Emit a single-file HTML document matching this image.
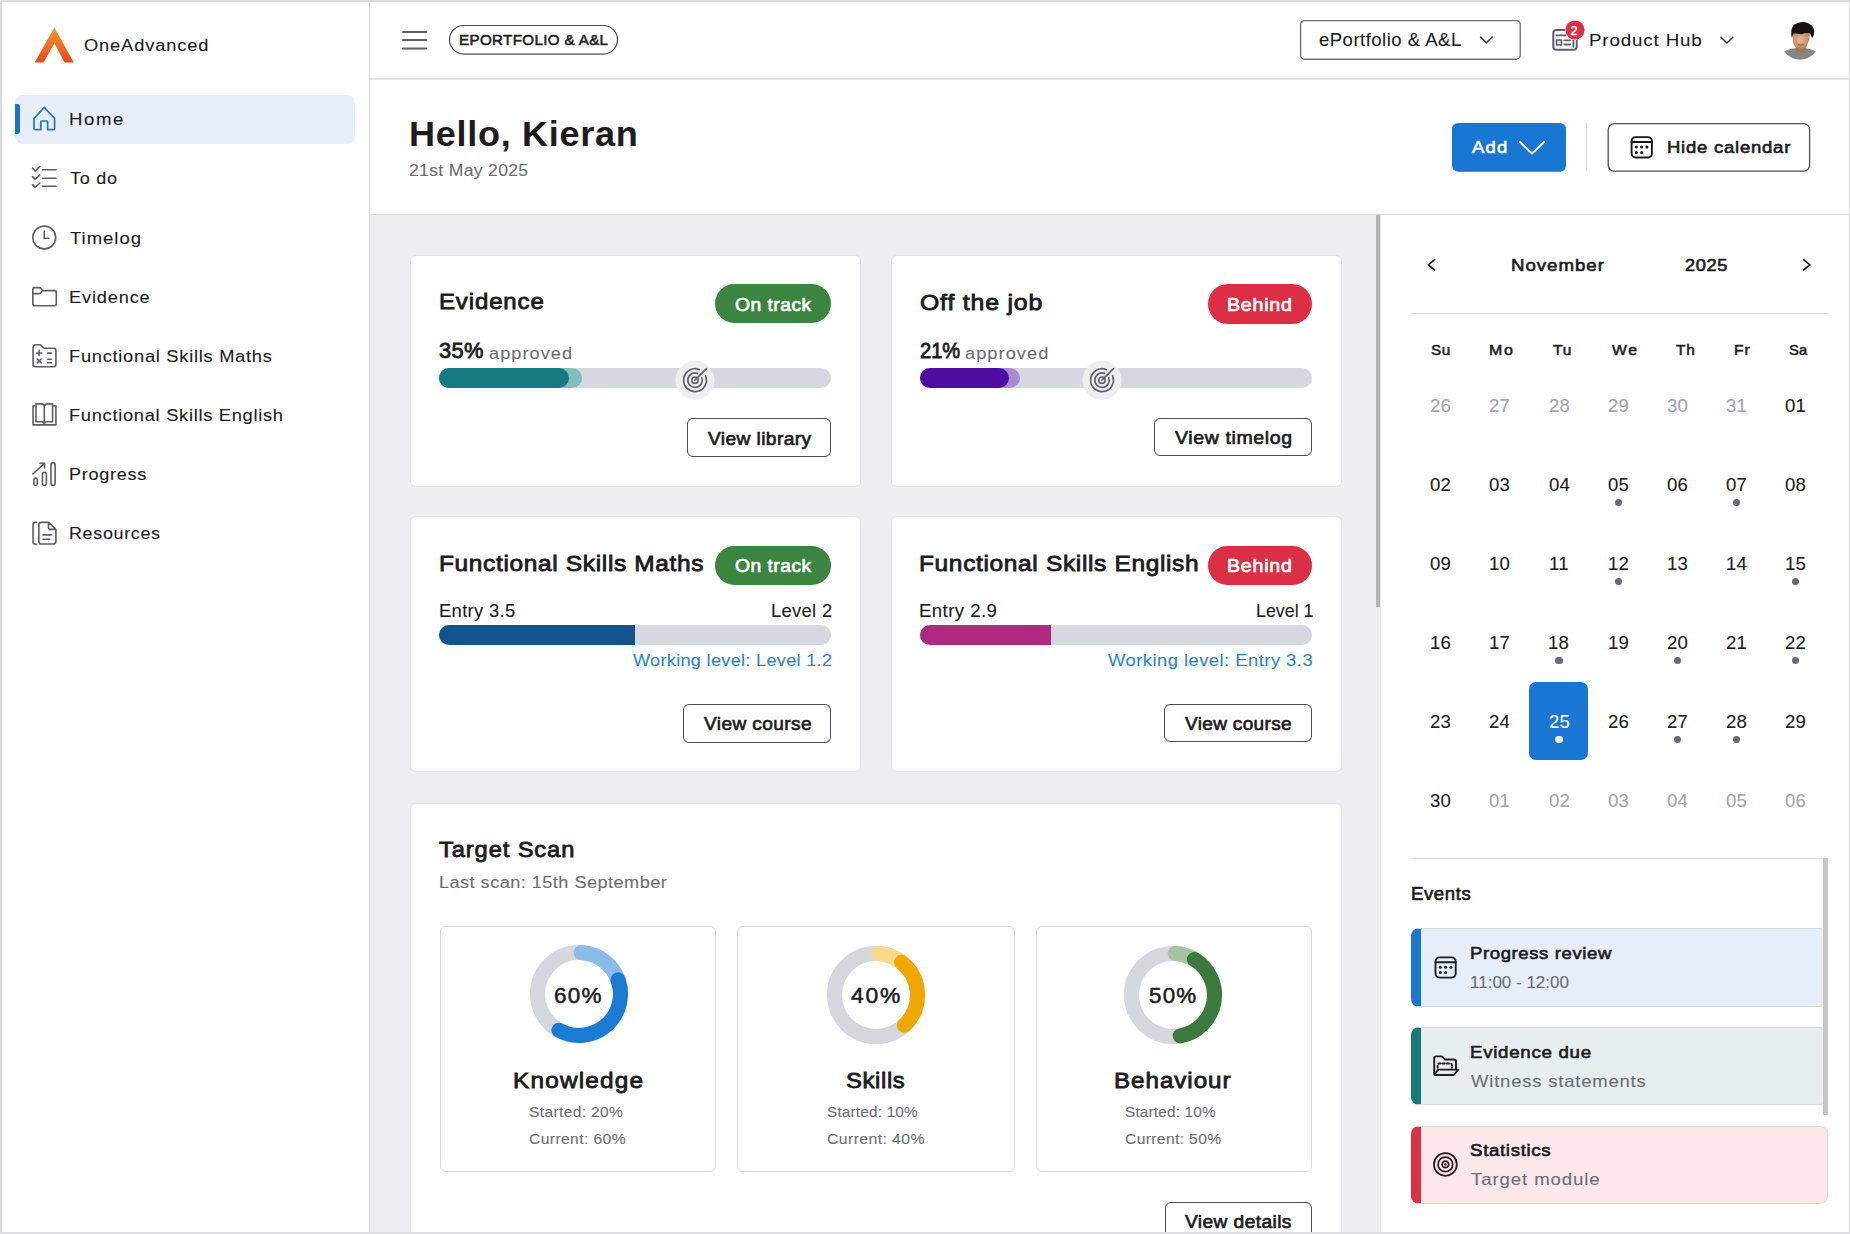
<!DOCTYPE html><html><head><meta charset="utf-8"><style>
html,body{margin:0;padding:0;width:1850px;height:1234px;overflow:hidden;background:#fff}
body{position:relative;font-family:"Liberation Sans",sans-serif}
.t{position:absolute;white-space:pre;line-height:1;transform-origin:0 0}
</style></head><body>
<div style="position:absolute;left:0px;top:0px;width:1850px;height:1234px;background:#fff"></div>
<div style="position:absolute;left:370px;top:215px;width:1011px;height:1019px;background:#eeeef1"></div>
<div style="position:absolute;left:369px;top:0px;width:1px;height:1234px;background:#d9d9dd"></div>
<div style="position:absolute;left:370px;top:78px;width:1480px;height:2px;background:#e3e3e6"></div>
<div style="position:absolute;left:370px;top:214px;width:1480px;height:1px;background:#dadade"></div>
<div style="position:absolute;left:1376px;top:215px;width:4px;height:392px;background:#b4b4b4"></div>
<div style="position:absolute;left:1380px;top:215px;width:1px;height:1019px;background:#e8e8ea"></div>
<svg style="position:absolute;left:0;top:0" width="370" height="80"><defs><linearGradient id="lg" x1="0" y1="0" x2="0" y2="1"><stop offset="0" stop-color="#f79a2a"/><stop offset="1" stop-color="#e8461f"/></linearGradient></defs><path d="M54.4 27.4 L73.8 62.6 L64.5 62.6 L54.4 43.3 L43.6 62.6 L34.6 62.6 Z" fill="url(#lg)"/></svg>
<div class="t" style="left:83.8px;top:37.5px;font-size:16.92px;letter-spacing:0.79px;color:#1b1b21;font-weight:400;-webkit-text-stroke:0.10px #1b1b21;transform:scaleX(1.0805);">OneAdvanced</div>
<div style="position:absolute;left:15px;top:94.5px;width:340px;height:49.5px;background:#e7eef9;border-radius:8px"></div>
<div style="position:absolute;left:15px;top:104px;width:5px;height:30px;background:#1a73c9;border-radius:0 3px 3px 0"></div>
<div class="t" style="left:68.8px;top:111.7px;font-size:16.78px;letter-spacing:1.41px;color:#1b1b21;font-weight:400;-webkit-text-stroke:0.10px #1b1b21;transform:scaleX(1.1099);">Home</div>
<div class="t" style="left:69.9px;top:171.1px;font-size:16.78px;letter-spacing:0.69px;color:#1b1b21;font-weight:400;-webkit-text-stroke:0.10px #1b1b21;transform:scaleX(1.0734);">To do</div>
<div class="t" style="left:69.9px;top:230.5px;font-size:16.78px;letter-spacing:0.90px;color:#1b1b21;font-weight:400;-webkit-text-stroke:0.10px #1b1b21;transform:scaleX(1.1028);">Timelog</div>
<div class="t" style="left:68.8px;top:289.8px;font-size:16.78px;letter-spacing:0.76px;color:#1b1b21;font-weight:400;-webkit-text-stroke:0.10px #1b1b21;transform:scaleX(1.0862);">Evidence</div>
<div class="t" style="left:68.8px;top:349.2px;font-size:16.78px;letter-spacing:0.65px;color:#1b1b21;font-weight:400;-webkit-text-stroke:0.10px #1b1b21;transform:scaleX(1.0919);">Functional Skills Maths</div>
<div class="t" style="left:68.8px;top:408.3px;font-size:16.78px;letter-spacing:0.63px;color:#1b1b21;font-weight:400;-webkit-text-stroke:0.10px #1b1b21;transform:scaleX(1.0921);">Functional Skills English</div>
<div class="t" style="left:68.8px;top:467.3px;font-size:16.78px;letter-spacing:0.66px;color:#1b1b21;font-weight:400;-webkit-text-stroke:0.10px #1b1b21;transform:scaleX(1.0760);">Progress</div>
<div class="t" style="left:68.8px;top:526.4px;font-size:16.78px;letter-spacing:0.63px;color:#1b1b21;font-weight:400;-webkit-text-stroke:0.10px #1b1b21;transform:scaleX(1.0685);">Resources</div>
<svg style="position:absolute;left:0;top:0" width="370" height="600" fill="none" stroke-linecap="round" stroke-linejoin="round">
<g stroke="#1f75c6" stroke-width="1.7"><path d="M34 118.5 L44.2 107.4 L54.6 118.5 V128.6 Q54.6 129.7 53.5 129.7 H47.6 V122 Q47.6 121 46.6 121 H41.8 Q40.8 121 40.8 122 V129.7 H35.1 Q34 129.7 34 128.6 Z"/></g>
<g stroke="#5d5d69" stroke-width="1.6">
<path d="M32.6 168.2 L35.2 171 L39.8 166.6 M32.6 176.6 L35.2 179.4 L39.8 175 M32.6 184.6 L35.2 187.4 L39.8 183"/>
<path d="M42.6 169.7 H56 M42.6 178.2 H56 M42.6 186.3 H56"/>
<circle cx="44.3" cy="237.5" r="11.4"/><path d="M44.2 231.4 V238.3 H49"/>
<path d="M32.8 289 Q32.8 287.6 34.2 287.6 H39.2 Q40.4 287.6 41.2 288.6 L42.5 290.6 H55 Q56.3 290.6 56.3 292 V304.3 Q56.3 305.7 55 305.7 H34.2 Q32.8 305.7 32.8 304.3 Z M32.8 293.6 H38.8 Q40.2 293.6 41 292.4 L42.2 290.8"/>
<path d="M33.1 347.2 Q33.1 344.7 35.6 344.7 H39.4 Q40.6 344.7 41.4 345.6 L43.2 347.6 Q43.8 348.3 44.8 348.3 H53.4 Q55.9 348.3 55.9 350.8 V364.2 Q55.9 366.7 53.4 366.7 H35.6 Q33.1 366.7 33.1 364.2 Z"/>
<path d="M39.15 350.4 V355.6 M36.55 353 H41.75 M37.2 359 L41.1 362.9 M41.1 359 L37.2 362.9 M47.7 353.1 H51.5 M47.7 359.2 H51.5 M47.7 362.8 H51.5"/>
<path d="M36 405.7 H33.06 V424.9 H55.9 V405.7 H52.6"/>
<path d="M44.3 423.6 V407.4 Q44.3 403.9 40.8 403.9 H36 V421.8 H41.6 Q43.6 421.8 44.3 423.6 M44.3 407.4 Q44.3 403.9 47.8 403.9 H52.6 V421.8 H47 Q45 421.8 44.3 423.6"/>
<path d="M32.7 474 L44.4 463.4 M39.9 463.2 H44.6 V468"/>
<rect x="33.86" y="478.1" width="3.34" height="7.2" rx="1.67"/><rect x="42.4" y="472.2" width="4" height="13.1" rx="2"/><rect x="51" y="462.9" width="4.1" height="22.4" rx="2.05"/>
<path d="M36.6 522.4 H35.6 Q33.06 522.4 33.06 525 V541.6 Q33.06 544.2 35.6 544.2 H36.6"/>
<path d="M38.8 525 Q38.8 522.4 41.4 522.4 H48.6 L55.9 529.4 V541.4 Q55.9 544 53.3 544 H41.4 Q38.8 544 38.8 541.4 Z M48.5 522.6 V527.4 Q48.5 529.4 50.5 529.4 H55.7 M43 534.9 H51.5 M43 539.2 H49.7"/>
</g></svg>
<svg style="position:absolute;left:370px;top:0" width="1480" height="215" fill="none" stroke-linecap="round" stroke-linejoin="round">
<g transform="translate(-370,0)">
<path d="M403 32 H426.2 M403 40 H426.2 M403 48.4 H426.2" stroke="#5d5d69" stroke-width="2"/>
<rect x="449.5" y="25.5" width="168" height="28.6" rx="14.3" stroke="#4c4c54" stroke-width="1.2"/>
<rect x="1300.6" y="20.6" width="219.6" height="38.6" rx="4" stroke="#6e6e78" stroke-width="1.4"/>
<path d="M1480.6 37 L1486.4 42.8 L1492.2 37" stroke="#3d3d45" stroke-width="1.6"/>
<rect x="1553.3" y="30.1" width="23.4" height="19.6" rx="3" stroke="#5d5d69" stroke-width="2"/>
<path d="M1556.5 35.3 H1566 M1564.4 40.3 H1570 M1564.4 44.5 H1570 M1573.4 38.5 V46.8" stroke="#5d5d69" stroke-width="1.8"/>
<rect x="1556.6" y="40" width="4.8" height="5" stroke="#5d5d69" stroke-width="1.7"/>
<circle cx="1575" cy="30" r="10.2" fill="#fff"/>
<circle cx="1575" cy="30" r="9.6" fill="#dc2d43" stroke="none"/>
<path d="M1721 37.2 L1726.9 43 L1732.8 37.2" stroke="#3d3d45" stroke-width="1.6"/>
<rect x="1452" y="123" width="114" height="48.8" rx="6" fill="#1976d2" stroke="none"/>
<path d="M1520 142 L1532 153.6 L1544 142" stroke="#fff" stroke-width="2"/>
<path d="M1586.5 123 V171" stroke="#dcdce0" stroke-width="1"/>
<rect x="1608.2" y="123.6" width="201.4" height="47.6" rx="6" stroke="#4e4e56" stroke-width="1.3"/>
<rect x="1631.6" y="137.1" width="20.3" height="20.4" rx="4" stroke="#16161a" stroke-width="1.9"/>
<path d="M1631.6 142 H1651.9" stroke="#16161a" stroke-width="1.9"/>
<g fill="#16161a" stroke="none"><circle cx="1636.3" cy="146.9" r="1.5"/><circle cx="1641.6" cy="146.9" r="1.5"/><circle cx="1646.9" cy="146.9" r="1.5"/><circle cx="1636.3" cy="152.5" r="1.5"/><circle cx="1641.6" cy="152.5" r="1.5"/></g>
</g></svg>
<div class="t" style="left:459.1px;top:33.4px;font-size:14.52px;letter-spacing:0.36px;color:#1b1b21;font-weight:400;-webkit-text-stroke:0.52px #1b1b21;transform:scaleX(1.0415);">EPORTFOLIO &amp; A&amp;L</div>
<div class="t" style="left:1319.3px;top:32.0px;font-size:17.48px;letter-spacing:0.47px;color:#1b1b21;font-weight:400;-webkit-text-stroke:0.10px #1b1b21;transform:scaleX(1.0589);">ePortfolio &amp; A&amp;L</div>
<div class="t" style="left:1589.2px;top:32.2px;font-size:17.20px;letter-spacing:0.78px;color:#1b1b21;font-weight:400;-webkit-text-stroke:0.10px #1b1b21;transform:scaleX(1.0909);">Product Hub</div>
<div class="t" style="left:1570.6px;top:25.0px;font-size:12.69px;letter-spacing:0.00px;color:#fff;font-weight:400;-webkit-text-stroke:0.46px #fff;">2</div>
<svg style="position:absolute;left:1780px;top:18px" width="40" height="44" viewBox="1780 18 40 44">
<defs><clipPath id="av"><circle cx="1800" cy="40.5" r="19.2"/></clipPath>
<radialGradient id="skin" cx="0.45" cy="0.4" r="0.6"><stop offset="0" stop-color="#e8b992"/><stop offset="1" stop-color="#b9805a"/></radialGradient></defs>
<g clip-path="url(#av)">
<path d="M1784 51.5 Q1790 48.2 1796.5 48 L1800.5 50.5 L1805 48 Q1811 48.5 1816.5 51.8 L1817 62 H1783 Z" fill="#858786"/>
<path d="M1795.5 44 L1796 50.5 Q1800.5 53 1805.5 50.5 L1805.5 44 Z" fill="#a56c48"/>
<path d="M1792.8 33 Q1792 44 1795.5 47.5 Q1800 51 1805 48 Q1809.5 44 1809.8 33 Z" fill="url(#skin)"/>
<path d="M1798 44.6 Q1800.5 45.8 1803.5 44.6" stroke="#8a5238" stroke-width="1" fill="none"/>
<path d="M1791.8 38 Q1789.8 29 1794 24.8 Q1799 21 1806 22.2 Q1813.5 24 1814.2 31 Q1814.4 35.5 1812 38.2 Q1811 34.5 1809.8 33.2 Q1805 32.6 1801.5 34.2 Q1797 33.2 1793.5 33.5 Q1792.6 35.5 1791.8 38 Z" fill="#161210"/>
</g></svg>
<div class="t" style="left:409.2px;top:116.6px;font-size:34.68px;letter-spacing:0.67px;color:#1b1b21;font-weight:700;transform:scaleX(1.0403);">Hello, Kieran</div>
<div class="t" style="left:409.2px;top:163.2px;font-size:16.92px;letter-spacing:0.33px;color:#6c6c78;font-weight:400;-webkit-text-stroke:0.10px #6c6c78;transform:scaleX(1.0371);">21st May 2025</div>
<div class="t" style="left:1471.9px;top:140.2px;font-size:16.92px;letter-spacing:1.19px;color:#fff;font-weight:400;-webkit-text-stroke:0.61px #fff;transform:scaleX(1.0874);">Add</div>
<div class="t" style="left:1666.6px;top:140.2px;font-size:16.92px;letter-spacing:0.72px;color:#1b1b21;font-weight:400;-webkit-text-stroke:0.61px #1b1b21;transform:scaleX(1.0915);">Hide calendar</div>
<div style="position:absolute;left:410px;top:255px;width:451px;height:232px;background:#fff;border:1px solid #e2e2e6;border-radius:6px;box-sizing:border-box"></div>
<div style="position:absolute;left:891px;top:255px;width:451px;height:232px;background:#fff;border:1px solid #e2e2e6;border-radius:6px;box-sizing:border-box"></div>
<div style="position:absolute;left:410px;top:516px;width:451px;height:256px;background:#fff;border:1px solid #e2e2e6;border-radius:6px;box-sizing:border-box"></div>
<div style="position:absolute;left:891px;top:516px;width:451px;height:256px;background:#fff;border:1px solid #e2e2e6;border-radius:6px;box-sizing:border-box"></div>
<div style="position:absolute;left:410px;top:803px;width:932px;height:497px;background:#fff;border:1px solid #e2e2e6;border-radius:6px;box-sizing:border-box"></div>
<div class="t" style="left:438.8px;top:290.9px;font-size:22.42px;letter-spacing:0.83px;color:#1b1b21;font-weight:400;-webkit-text-stroke:0.81px #1b1b21;transform:scaleX(1.0690);">Evidence</div>
<div style="position:absolute;left:715.3px;top:284.1px;width:115.90000000000009px;height:39.39999999999998px;background:#3c8541;border-radius:20px"></div>
<div class="t" style="left:734.7px;top:296.0px;font-size:18.33px;letter-spacing:0.47px;color:#fff;font-weight:400;-webkit-text-stroke:0.66px #fff;transform:scaleX(1.0505);">On track</div>
<div class="t" style="left:439.0px;top:340.8px;font-size:21.43px;letter-spacing:0.36px;color:#1b1b21;font-weight:400;-webkit-text-stroke:0.77px #1b1b21;transform:scaleX(1.0176);">35%</div>
<div class="t" style="left:488.5px;top:345.1px;font-size:16.35px;letter-spacing:0.95px;color:#6c6c78;font-weight:400;-webkit-text-stroke:0.10px #6c6c78;transform:scaleX(1.1105);">approved</div>
<div style="position:absolute;left:439px;top:368px;width:392px;height:20px;background:#d7d7e0;border-radius:10px"></div>
<div style="position:absolute;left:439px;top:368px;width:142.60000000000002px;height:20px;background:#82bfba;border-radius:10px"></div>
<div style="position:absolute;left:439px;top:368px;width:129.5px;height:20px;background:#167b81;border-radius:10px"></div>
<div style="position:absolute;left:687.2px;top:417.7px;width:144.0px;height:39.0px;border:1.3px solid #4e4e56;border-radius:6px;box-sizing:border-box"></div>
<div class="t" style="left:707.7px;top:429.6px;font-size:18.33px;letter-spacing:0.38px;color:#1b1b21;font-weight:400;-webkit-text-stroke:0.66px #1b1b21;transform:scaleX(1.0465);">View library</div>
<div class="t" style="left:919.8px;top:291.1px;font-size:22.98px;letter-spacing:0.77px;color:#1b1b21;font-weight:400;-webkit-text-stroke:0.83px #1b1b21;transform:scaleX(1.0796);">Off the job</div>
<div style="position:absolute;left:1208.4px;top:284px;width:104.0px;height:39.80000000000001px;background:#dc2f45;border-radius:20px"></div>
<div class="t" style="left:1227.4px;top:296.0px;font-size:18.33px;letter-spacing:0.72px;color:#fff;font-weight:400;-webkit-text-stroke:0.66px #fff;transform:scaleX(1.0699);">Behind</div>
<div class="t" style="left:919.9px;top:340.8px;font-size:21.43px;letter-spacing:0.00px;color:#1b1b21;font-weight:400;-webkit-text-stroke:0.77px #1b1b21;transform:scaleX(0.9376);">21%</div>
<div class="t" style="left:965.3px;top:345.1px;font-size:16.35px;letter-spacing:0.96px;color:#6c6c78;font-weight:400;-webkit-text-stroke:0.10px #6c6c78;transform:scaleX(1.1128);">approved</div>
<div style="position:absolute;left:920px;top:368px;width:392.4000000000001px;height:20px;background:#d7d7e0;border-radius:10px"></div>
<div style="position:absolute;left:920px;top:368px;width:99.79999999999995px;height:20px;background:#a98ad4;border-radius:10px"></div>
<div style="position:absolute;left:920px;top:368px;width:88.79999999999995px;height:20px;background:#4e0da0;border-radius:10px"></div>
<div style="position:absolute;left:1154.3px;top:417.6px;width:158.10000000000014px;height:38.599999999999966px;border:1.3px solid #4e4e56;border-radius:6px;box-sizing:border-box"></div>
<div class="t" style="left:1175.3px;top:429.2px;font-size:18.33px;letter-spacing:0.57px;color:#1b1b21;font-weight:400;-webkit-text-stroke:0.66px #1b1b21;transform:scaleX(1.0654);">View timelog</div>
<svg style="position:absolute;left:675.3px;top:360px" width="40" height="40" viewBox="675.3 360 40 40" fill="none">
<circle cx="695.3" cy="380.2" r="19.5" fill="#eeeef1"/>
<path d="M705.8 375.7 A11.4 11.4 0 1 1 699.8 369.7" stroke="#63636d" stroke-width="1.75" stroke-linecap="round"/>
<path d="M702.0999999999999 377.7 A7.2 7.2 0 1 1 697.8 373.4" stroke="#63636d" stroke-width="1.75" stroke-linecap="round"/>
<circle cx="695.3" cy="380.2" r="3.2" stroke="#63636d" stroke-width="1.6"/>
<path d="M695.3 380.2 L706.8 368.7" stroke="#63636d" stroke-width="1.75" stroke-linecap="round"/>
</svg>
<svg style="position:absolute;left:1082.4px;top:360px" width="40" height="40" viewBox="1082.4 360 40 40" fill="none">
<circle cx="1102.4" cy="380.2" r="19.5" fill="#eeeef1"/>
<path d="M1112.9 375.7 A11.4 11.4 0 1 1 1106.9 369.7" stroke="#63636d" stroke-width="1.75" stroke-linecap="round"/>
<path d="M1109.2 377.7 A7.2 7.2 0 1 1 1104.9 373.4" stroke="#63636d" stroke-width="1.75" stroke-linecap="round"/>
<circle cx="1102.4" cy="380.2" r="3.2" stroke="#63636d" stroke-width="1.6"/>
<path d="M1102.4 380.2 L1113.9 368.7" stroke="#63636d" stroke-width="1.75" stroke-linecap="round"/>
</svg>
<div class="t" style="left:438.7px;top:552.0px;font-size:22.98px;letter-spacing:0.63px;color:#1b1b21;font-weight:400;-webkit-text-stroke:0.83px #1b1b21;transform:scaleX(1.0635);">Functional Skills Maths</div>
<div style="position:absolute;left:715.3px;top:546.2px;width:115.90000000000009px;height:38.59999999999991px;background:#3c8541;border-radius:20px"></div>
<div class="t" style="left:734.7px;top:557.0px;font-size:18.33px;letter-spacing:0.47px;color:#fff;font-weight:400;-webkit-text-stroke:0.66px #fff;transform:scaleX(1.0505);">On track</div>
<div class="t" style="left:438.6px;top:602.7px;font-size:17.76px;letter-spacing:0.31px;color:#1b1b21;font-weight:400;-webkit-text-stroke:0.10px #1b1b21;transform:scaleX(1.0375);">Entry 3.5</div>
<div class="t" style="left:770.9px;top:602.7px;font-size:17.76px;letter-spacing:0.31px;color:#1b1b21;font-weight:400;-webkit-text-stroke:0.10px #1b1b21;transform:scaleX(1.0347);">Level 2</div>
<div style="position:absolute;left:439px;top:625px;width:392px;height:19.5px;background:#d7d7e0;border-radius:10px"></div>
<div style="position:absolute;left:439px;top:625px;width:195.79999999999995px;height:19.5px;background:#13528b;border-radius:10px 0 0 10px"></div>
<div class="t" style="left:633.0px;top:651.5px;font-size:17.34px;letter-spacing:0.32px;color:#2a86d1;font-weight:400;-webkit-text-stroke:0.10px #2a86d1;transform:scaleX(1.0419);">Working level: Level 1.2</div>
<div style="position:absolute;left:683.3px;top:704.2px;width:147.9000000000001px;height:38.39999999999998px;border:1.3px solid #4e4e56;border-radius:6px;box-sizing:border-box"></div>
<div class="t" style="left:704.2px;top:715.0px;font-size:18.33px;letter-spacing:0.39px;color:#1b1b21;font-weight:400;-webkit-text-stroke:0.66px #1b1b21;transform:scaleX(1.0405);">View course</div>
<div class="t" style="left:919.0px;top:552.4px;font-size:22.98px;letter-spacing:0.62px;color:#1b1b21;font-weight:400;-webkit-text-stroke:0.83px #1b1b21;transform:scaleX(1.0650);">Functional Skills English</div>
<div style="position:absolute;left:1208.4px;top:546px;width:104.0px;height:38.60000000000002px;background:#dc2f45;border-radius:20px"></div>
<div class="t" style="left:1227.4px;top:557.0px;font-size:18.33px;letter-spacing:0.72px;color:#fff;font-weight:400;-webkit-text-stroke:0.66px #fff;transform:scaleX(1.0699);">Behind</div>
<div class="t" style="left:919.1px;top:602.7px;font-size:17.76px;letter-spacing:0.40px;color:#1b1b21;font-weight:400;-webkit-text-stroke:0.10px #1b1b21;transform:scaleX(1.0490);">Entry 2.9</div>
<div class="t" style="left:1255.6px;top:602.7px;font-size:17.76px;letter-spacing:0.02px;color:#1b1b21;font-weight:400;-webkit-text-stroke:0.10px #1b1b21;transform:scaleX(1.0021);">Level 1</div>
<div style="position:absolute;left:920px;top:625px;width:392.4000000000001px;height:19.5px;background:#d7d7e0;border-radius:10px"></div>
<div style="position:absolute;left:920px;top:625px;width:130.79999999999995px;height:19.5px;background:#b0287f;border-radius:10px 0 0 10px"></div>
<div class="t" style="left:1108.4px;top:651.5px;font-size:17.34px;letter-spacing:0.45px;color:#2a86d1;font-weight:400;-webkit-text-stroke:0.10px #2a86d1;transform:scaleX(1.0601);">Working level: Entry 3.3</div>
<div style="position:absolute;left:1164.3px;top:704px;width:148.10000000000014px;height:38.39999999999998px;border:1.3px solid #4e4e56;border-radius:6px;box-sizing:border-box"></div>
<div class="t" style="left:1185.2px;top:715.0px;font-size:18.33px;letter-spacing:0.34px;color:#1b1b21;font-weight:400;-webkit-text-stroke:0.66px #1b1b21;transform:scaleX(1.0359);">View course</div>
<div class="t" style="left:439.4px;top:839.1px;font-size:21.99px;letter-spacing:0.83px;color:#1b1b21;font-weight:400;-webkit-text-stroke:0.79px #1b1b21;transform:scaleX(1.0771);">Target Scan</div>
<div class="t" style="left:439.0px;top:873.7px;font-size:17.20px;letter-spacing:0.44px;color:#6c6c78;font-weight:400;-webkit-text-stroke:0.10px #6c6c78;transform:scaleX(1.0546);">Last scan: 15th September</div>
<div style="position:absolute;left:439.7px;top:926px;width:276.8px;height:246px;background:#fff;border:1px solid #dcdce2;border-radius:6px;box-sizing:border-box"></div>
<div style="position:absolute;left:737px;top:926px;width:277.5px;height:246px;background:#fff;border:1px solid #dcdce2;border-radius:6px;box-sizing:border-box"></div>
<div style="position:absolute;left:1035.5px;top:926px;width:276.70000000000005px;height:246px;background:#fff;border:1px solid #dcdce2;border-radius:6px;box-sizing:border-box"></div>
<svg style="position:absolute;left:523.6px;top:939.4px" width="110" height="110" viewBox="523.6 939.4 110 110" fill="none" stroke-width="15" stroke-linecap="round">
<circle cx="578.6" cy="994.4" r="41.5" stroke="#d6d6df" stroke-linecap="butt"/>
<path d="M580.77 952.96 A41.5 41.5 0 0 1 618.07 981.58" stroke="#8bbbe9"/>
<path d="M617.60 980.21 A41.5 41.5 0 0 1 558.48 1030.70" stroke="#1a7bd4"/>
</svg>
<div class="t" style="left:553.6px;top:985.0px;font-size:21.15px;letter-spacing:1.22px;color:#1b1b21;font-weight:400;-webkit-text-stroke:0.50px #1b1b21;transform:scaleX(1.0634);">60%</div>
<div class="t" style="left:512.9px;top:1070.1px;font-size:22.42px;letter-spacing:1.09px;color:#1b1b21;font-weight:400;-webkit-text-stroke:0.81px #1b1b21;transform:scaleX(1.0870);">Knowledge</div>
<div class="t" style="left:529.1px;top:1105.0px;font-size:14.94px;letter-spacing:0.33px;color:#6c6c78;font-weight:400;-webkit-text-stroke:0.10px #6c6c78;transform:scaleX(1.0441);">Started: 20%</div>
<div class="t" style="left:529.0px;top:1132.0px;font-size:14.94px;letter-spacing:0.37px;color:#6c6c78;font-weight:400;-webkit-text-stroke:0.10px #6c6c78;transform:scaleX(1.0487);">Current: 60%</div>
<svg style="position:absolute;left:820.5px;top:939.6px" width="110" height="110" viewBox="820.5 939.6 110 110" fill="none" stroke-width="15" stroke-linecap="round">
<circle cx="875.5" cy="994.6" r="41.5" stroke="#d6d6df" stroke-linecap="butt"/>
<path d="M877.67 953.16 A41.5 41.5 0 0 1 899.89 961.03" stroke="#f8d88a"/>
<path d="M901.05 961.90 A41.5 41.5 0 0 1 903.80 1024.95" stroke="#f0a800"/>
</svg>
<div class="t" style="left:850.8px;top:985.0px;font-size:21.15px;letter-spacing:1.59px;color:#1b1b21;font-weight:400;-webkit-text-stroke:0.50px #1b1b21;transform:scaleX(1.0825);">40%</div>
<div class="t" style="left:846.1px;top:1070.1px;font-size:22.42px;letter-spacing:0.60px;color:#1b1b21;font-weight:400;-webkit-text-stroke:0.81px #1b1b21;transform:scaleX(1.0617);">Skills</div>
<div class="t" style="left:826.7px;top:1105.0px;font-size:14.94px;letter-spacing:0.19px;color:#6c6c78;font-weight:400;-webkit-text-stroke:0.10px #6c6c78;transform:scaleX(1.0253);">Started: 10%</div>
<div class="t" style="left:826.6px;top:1132.0px;font-size:14.94px;letter-spacing:0.40px;color:#6c6c78;font-weight:400;-webkit-text-stroke:0.10px #6c6c78;transform:scaleX(1.0539);">Current: 40%</div>
<svg style="position:absolute;left:1118px;top:939.6px" width="110" height="110" viewBox="1118 939.6 110 110" fill="none" stroke-width="15" stroke-linecap="round">
<circle cx="1173" cy="994.6" r="41.5" stroke="#d6d6df" stroke-linecap="butt"/>
<path d="M1175.17 953.16 A41.5 41.5 0 0 1 1197.39 961.03" stroke="#a3c4a2"/>
<path d="M1194.37 959.03 A41.5 41.5 0 0 1 1180.21 1035.47" stroke="#3a7a3e"/>
</svg>
<div class="t" style="left:1148.7px;top:985.0px;font-size:21.15px;letter-spacing:1.13px;color:#1b1b21;font-weight:400;-webkit-text-stroke:0.50px #1b1b21;transform:scaleX(1.0581);">50%</div>
<div class="t" style="left:1114.3px;top:1070.1px;font-size:22.42px;letter-spacing:0.90px;color:#1b1b21;font-weight:400;-webkit-text-stroke:0.81px #1b1b21;transform:scaleX(1.0781);">Behaviour</div>
<div class="t" style="left:1124.6px;top:1105.0px;font-size:14.94px;letter-spacing:0.19px;color:#6c6c78;font-weight:400;-webkit-text-stroke:0.10px #6c6c78;transform:scaleX(1.0247);">Started: 10%</div>
<div class="t" style="left:1124.5px;top:1132.0px;font-size:14.94px;letter-spacing:0.35px;color:#6c6c78;font-weight:400;-webkit-text-stroke:0.10px #6c6c78;transform:scaleX(1.0464);">Current: 50%</div>
<div style="position:absolute;left:1165.4px;top:1202px;width:146.5999999999999px;height:48px;border:1.3px solid #4e4e56;border-radius:6px;box-sizing:border-box"></div>
<div class="t" style="left:1185.2px;top:1212.9px;font-size:18.33px;letter-spacing:0.39px;color:#1b1b21;font-weight:400;-webkit-text-stroke:0.66px #1b1b21;transform:scaleX(1.0460);">View details</div>
<svg style="position:absolute;left:1381px;top:215px" width="469" height="1019" viewBox="1381 215 469 1019" fill="none" stroke-linecap="round" stroke-linejoin="round">
<path d="M1434.6 259.6 L1428.3 264.8 L1434.6 270" stroke="#1b1b21" stroke-width="1.7"/>
<path d="M1803.6 259.6 L1809.9 264.8 L1803.6 270" stroke="#1b1b21" stroke-width="1.7"/>
</svg>
<div class="t" style="left:1511.0px;top:257.3px;font-size:17.20px;letter-spacing:0.89px;color:#1b1b21;font-weight:400;-webkit-text-stroke:0.62px #1b1b21;transform:scaleX(1.0864);">November</div>
<div class="t" style="left:1684.7px;top:257.3px;font-size:17.20px;letter-spacing:0.66px;color:#1b1b21;font-weight:400;-webkit-text-stroke:0.62px #1b1b21;transform:scaleX(1.0557);">2025</div>
<div style="position:absolute;left:1411px;top:312.5px;width:417px;height:1.0px;background:#dcdce0"></div>
<div class="t" style="left:1430.6px;top:343.3px;font-size:14.66px;letter-spacing:0.58px;color:#1b1b21;font-weight:400;-webkit-text-stroke:0.53px #1b1b21;transform:scaleX(1.0356);">Su</div>
<div class="t" style="left:1489.0px;top:343.3px;font-size:14.66px;letter-spacing:1.62px;color:#1b1b21;font-weight:400;-webkit-text-stroke:0.53px #1b1b21;transform:scaleX(1.0927);">Mo</div>
<div class="t" style="left:1553.0px;top:343.3px;font-size:14.66px;letter-spacing:0.83px;color:#1b1b21;font-weight:400;-webkit-text-stroke:0.53px #1b1b21;transform:scaleX(1.0552);">Tu</div>
<div class="t" style="left:1611.5px;top:343.3px;font-size:14.66px;letter-spacing:1.49px;color:#1b1b21;font-weight:400;-webkit-text-stroke:0.53px #1b1b21;transform:scaleX(1.0745);">We</div>
<div class="t" style="left:1676.2px;top:343.3px;font-size:14.66px;letter-spacing:0.82px;color:#1b1b21;font-weight:400;-webkit-text-stroke:0.53px #1b1b21;transform:scaleX(1.0531);">Th</div>
<div class="t" style="left:1733.6px;top:343.3px;font-size:14.66px;letter-spacing:0.83px;color:#1b1b21;font-weight:400;-webkit-text-stroke:0.53px #1b1b21;transform:scaleX(1.0690);">Fr</div>
<div class="t" style="left:1788.6px;top:343.3px;font-size:14.66px;letter-spacing:0.22px;color:#1b1b21;font-weight:400;-webkit-text-stroke:0.53px #1b1b21;transform:scaleX(1.0125);">Sa</div>
<div style="position:absolute;left:1529.3px;top:681.6px;width:58.90000000000009px;height:78.5px;background:#1976d2;border-radius:7px"></div>
<div class="t" style="left:1430.1px;top:397.3px;font-size:18.33px;letter-spacing:0.25px;color:#a3a3ad;font-weight:400;-webkit-text-stroke:0.10px #a3a3ad;transform:scaleX(1.0133);">26</div>
<div class="t" style="left:1489.4px;top:397.3px;font-size:18.33px;letter-spacing:0.25px;color:#a3a3ad;font-weight:400;-webkit-text-stroke:0.10px #a3a3ad;transform:scaleX(1.0134);">27</div>
<div class="t" style="left:1548.5px;top:397.3px;font-size:18.33px;letter-spacing:0.25px;color:#a3a3ad;font-weight:400;-webkit-text-stroke:0.10px #a3a3ad;transform:scaleX(1.0133);">28</div>
<div class="t" style="left:1607.7px;top:397.3px;font-size:18.33px;letter-spacing:0.25px;color:#a3a3ad;font-weight:400;-webkit-text-stroke:0.10px #a3a3ad;transform:scaleX(1.0134);">29</div>
<div class="t" style="left:1666.9px;top:397.3px;font-size:18.33px;letter-spacing:0.25px;color:#a3a3ad;font-weight:400;-webkit-text-stroke:0.10px #a3a3ad;transform:scaleX(1.0131);">30</div>
<div class="t" style="left:1726.2px;top:397.3px;font-size:18.33px;letter-spacing:0.25px;color:#a3a3ad;font-weight:400;-webkit-text-stroke:0.10px #a3a3ad;transform:scaleX(1.0132);">31</div>
<div class="t" style="left:1785.4px;top:397.3px;font-size:18.33px;letter-spacing:0.25px;color:#1b1b21;font-weight:400;-webkit-text-stroke:0.10px #1b1b21;transform:scaleX(1.0132);">01</div>
<div class="t" style="left:1430.3px;top:476.1px;font-size:18.33px;letter-spacing:0.25px;color:#1b1b21;font-weight:400;-webkit-text-stroke:0.10px #1b1b21;transform:scaleX(1.0133);">02</div>
<div class="t" style="left:1489.4px;top:476.1px;font-size:18.33px;letter-spacing:0.25px;color:#1b1b21;font-weight:400;-webkit-text-stroke:0.10px #1b1b21;transform:scaleX(1.0132);">03</div>
<div class="t" style="left:1548.5px;top:476.1px;font-size:18.33px;letter-spacing:0.25px;color:#1b1b21;font-weight:400;-webkit-text-stroke:0.10px #1b1b21;transform:scaleX(1.0130);">04</div>
<div class="t" style="left:1607.8px;top:476.1px;font-size:18.33px;letter-spacing:0.25px;color:#1b1b21;font-weight:400;-webkit-text-stroke:0.10px #1b1b21;transform:scaleX(1.0132);">05</div>
<div style="position:absolute;left:1614.4999999999998px;top:499.05px;width:7.400000000000091px;height:7.399999999999977px;background:#6a6779;border-radius:50%"></div>
<div class="t" style="left:1667.0px;top:476.1px;font-size:18.33px;letter-spacing:0.25px;color:#1b1b21;font-weight:400;-webkit-text-stroke:0.10px #1b1b21;transform:scaleX(1.0132);">06</div>
<div class="t" style="left:1726.3px;top:476.1px;font-size:18.33px;letter-spacing:0.25px;color:#1b1b21;font-weight:400;-webkit-text-stroke:0.10px #1b1b21;transform:scaleX(1.0133);">07</div>
<div style="position:absolute;left:1732.8999999999999px;top:499.05px;width:7.400000000000091px;height:7.399999999999977px;background:#6a6779;border-radius:50%"></div>
<div class="t" style="left:1785.4px;top:476.1px;font-size:18.33px;letter-spacing:0.25px;color:#1b1b21;font-weight:400;-webkit-text-stroke:0.10px #1b1b21;transform:scaleX(1.0132);">08</div>
<div class="t" style="left:1430.2px;top:555.0px;font-size:18.33px;letter-spacing:0.25px;color:#1b1b21;font-weight:400;-webkit-text-stroke:0.10px #1b1b21;transform:scaleX(1.0132);">09</div>
<div class="t" style="left:1489.0px;top:555.0px;font-size:18.33px;letter-spacing:0.25px;color:#1b1b21;font-weight:400;-webkit-text-stroke:0.10px #1b1b21;transform:scaleX(1.0136);">10</div>
<div class="t" style="left:1549.0px;top:555.0px;font-size:18.33px;letter-spacing:0.25px;color:#1b1b21;font-weight:400;-webkit-text-stroke:0.10px #1b1b21;transform:scaleX(1.0148);">11</div>
<div class="t" style="left:1607.5px;top:555.0px;font-size:18.33px;letter-spacing:0.25px;color:#1b1b21;font-weight:400;-webkit-text-stroke:0.10px #1b1b21;transform:scaleX(1.0138);">12</div>
<div style="position:absolute;left:1614.4999999999998px;top:577.8999999999999px;width:7.400000000000091px;height:7.400000000000091px;background:#6a6779;border-radius:50%"></div>
<div class="t" style="left:1666.6px;top:555.0px;font-size:18.33px;letter-spacing:0.25px;color:#1b1b21;font-weight:400;-webkit-text-stroke:0.10px #1b1b21;transform:scaleX(1.0136);">13</div>
<div class="t" style="left:1725.7px;top:555.0px;font-size:18.33px;letter-spacing:0.25px;color:#1b1b21;font-weight:400;-webkit-text-stroke:0.10px #1b1b21;transform:scaleX(1.0135);">14</div>
<div class="t" style="left:1785.0px;top:555.0px;font-size:18.33px;letter-spacing:0.25px;color:#1b1b21;font-weight:400;-webkit-text-stroke:0.10px #1b1b21;transform:scaleX(1.0136);">15</div>
<div style="position:absolute;left:1792.1px;top:577.8999999999999px;width:7.400000000000091px;height:7.400000000000091px;background:#6a6779;border-radius:50%"></div>
<div class="t" style="left:1429.8px;top:633.8px;font-size:18.33px;letter-spacing:0.25px;color:#1b1b21;font-weight:400;-webkit-text-stroke:0.10px #1b1b21;transform:scaleX(1.0136);">16</div>
<div class="t" style="left:1489.1px;top:633.8px;font-size:18.33px;letter-spacing:0.25px;color:#1b1b21;font-weight:400;-webkit-text-stroke:0.10px #1b1b21;transform:scaleX(1.0138);">17</div>
<div class="t" style="left:1548.2px;top:633.8px;font-size:18.33px;letter-spacing:0.25px;color:#1b1b21;font-weight:400;-webkit-text-stroke:0.10px #1b1b21;transform:scaleX(1.0136);">18</div>
<div style="position:absolute;left:1555.3px;top:656.7499999999999px;width:7.400000000000091px;height:7.400000000000091px;background:#6a6779;border-radius:50%"></div>
<div class="t" style="left:1607.5px;top:633.8px;font-size:18.33px;letter-spacing:0.25px;color:#1b1b21;font-weight:400;-webkit-text-stroke:0.10px #1b1b21;transform:scaleX(1.0137);">19</div>
<div class="t" style="left:1666.8px;top:633.8px;font-size:18.33px;letter-spacing:0.25px;color:#1b1b21;font-weight:400;-webkit-text-stroke:0.10px #1b1b21;transform:scaleX(1.0132);">20</div>
<div style="position:absolute;left:1673.6999999999998px;top:656.7499999999999px;width:7.400000000000091px;height:7.400000000000091px;background:#6a6779;border-radius:50%"></div>
<div class="t" style="left:1726.1px;top:633.8px;font-size:18.33px;letter-spacing:0.25px;color:#1b1b21;font-weight:400;-webkit-text-stroke:0.10px #1b1b21;transform:scaleX(1.0134);">21</div>
<div class="t" style="left:1785.4px;top:633.8px;font-size:18.33px;letter-spacing:0.25px;color:#1b1b21;font-weight:400;-webkit-text-stroke:0.10px #1b1b21;transform:scaleX(1.0134);">22</div>
<div style="position:absolute;left:1792.1px;top:656.7499999999999px;width:7.400000000000091px;height:7.400000000000091px;background:#6a6779;border-radius:50%"></div>
<div class="t" style="left:1430.1px;top:712.7px;font-size:18.33px;letter-spacing:0.25px;color:#1b1b21;font-weight:400;-webkit-text-stroke:0.10px #1b1b21;transform:scaleX(1.0133);">23</div>
<div class="t" style="left:1489.2px;top:712.7px;font-size:18.33px;letter-spacing:0.25px;color:#1b1b21;font-weight:400;-webkit-text-stroke:0.10px #1b1b21;transform:scaleX(1.0132);">24</div>
<div class="t" style="left:1548.5px;top:712.7px;font-size:18.33px;letter-spacing:0.25px;color:#fff;font-weight:400;-webkit-text-stroke:0.10px #fff;transform:scaleX(1.0133);">25</div>
<div style="position:absolute;left:1555.3px;top:735.5999999999999px;width:7.400000000000091px;height:7.400000000000091px;background:#fff;border-radius:50%"></div>
<div class="t" style="left:1607.7px;top:712.7px;font-size:18.33px;letter-spacing:0.25px;color:#1b1b21;font-weight:400;-webkit-text-stroke:0.10px #1b1b21;transform:scaleX(1.0133);">26</div>
<div class="t" style="left:1667.0px;top:712.7px;font-size:18.33px;letter-spacing:0.25px;color:#1b1b21;font-weight:400;-webkit-text-stroke:0.10px #1b1b21;transform:scaleX(1.0134);">27</div>
<div style="position:absolute;left:1673.6999999999998px;top:735.5999999999999px;width:7.400000000000091px;height:7.400000000000091px;background:#6a6779;border-radius:50%"></div>
<div class="t" style="left:1726.1px;top:712.7px;font-size:18.33px;letter-spacing:0.25px;color:#1b1b21;font-weight:400;-webkit-text-stroke:0.10px #1b1b21;transform:scaleX(1.0133);">28</div>
<div style="position:absolute;left:1732.8999999999999px;top:735.5999999999999px;width:7.400000000000091px;height:7.400000000000091px;background:#6a6779;border-radius:50%"></div>
<div class="t" style="left:1785.3px;top:712.7px;font-size:18.33px;letter-spacing:0.25px;color:#1b1b21;font-weight:400;-webkit-text-stroke:0.10px #1b1b21;transform:scaleX(1.0134);">29</div>
<div class="t" style="left:1430.1px;top:791.5px;font-size:18.33px;letter-spacing:0.25px;color:#1b1b21;font-weight:400;-webkit-text-stroke:0.10px #1b1b21;transform:scaleX(1.0131);">30</div>
<div class="t" style="left:1489.4px;top:791.5px;font-size:18.33px;letter-spacing:0.25px;color:#a3a3ad;font-weight:400;-webkit-text-stroke:0.10px #a3a3ad;transform:scaleX(1.0132);">01</div>
<div class="t" style="left:1548.7px;top:791.5px;font-size:18.33px;letter-spacing:0.25px;color:#a3a3ad;font-weight:400;-webkit-text-stroke:0.10px #a3a3ad;transform:scaleX(1.0133);">02</div>
<div class="t" style="left:1607.8px;top:791.5px;font-size:18.33px;letter-spacing:0.25px;color:#a3a3ad;font-weight:400;-webkit-text-stroke:0.10px #a3a3ad;transform:scaleX(1.0132);">03</div>
<div class="t" style="left:1666.9px;top:791.5px;font-size:18.33px;letter-spacing:0.25px;color:#a3a3ad;font-weight:400;-webkit-text-stroke:0.10px #a3a3ad;transform:scaleX(1.0130);">04</div>
<div class="t" style="left:1726.2px;top:791.5px;font-size:18.33px;letter-spacing:0.25px;color:#a3a3ad;font-weight:400;-webkit-text-stroke:0.10px #a3a3ad;transform:scaleX(1.0132);">05</div>
<div class="t" style="left:1785.4px;top:791.5px;font-size:18.33px;letter-spacing:0.25px;color:#a3a3ad;font-weight:400;-webkit-text-stroke:0.10px #a3a3ad;transform:scaleX(1.0132);">06</div>
<div style="position:absolute;left:1411px;top:857.5px;width:414px;height:1.0px;background:#dcdce0"></div>
<div class="t" style="left:1410.9px;top:885.9px;font-size:17.48px;letter-spacing:0.58px;color:#1b1b21;font-weight:400;-webkit-text-stroke:0.63px #1b1b21;transform:scaleX(1.0593);">Events</div>
<div style="position:absolute;left:1410.5px;top:927.8px;width:417.0999999999999px;height:78.80000000000007px;background:#e6eef9;border:1px solid #d8d8de;border-left:10px solid #1b76d2;border-radius:8px;box-sizing:border-box"></div>
<div class="t" style="left:1469.7px;top:945.4px;font-size:17.34px;letter-spacing:0.57px;color:#1b1b21;font-weight:400;-webkit-text-stroke:0.62px #1b1b21;transform:scaleX(1.0689);">Progress review</div>
<div class="t" style="left:1469.6px;top:975.0px;font-size:16.92px;letter-spacing:0.02px;color:#6c6c78;font-weight:400;-webkit-text-stroke:0.10px #6c6c78;transform:scaleX(1.0031);">11:00 - 12:00</div>
<div style="position:absolute;left:1410.5px;top:1026.8px;width:417.0999999999999px;height:78.5px;background:#e6efee;border:1px solid #d8d8de;border-left:10px solid #167a7a;border-radius:8px;box-sizing:border-box"></div>
<div class="t" style="left:1469.6px;top:1043.9px;font-size:17.34px;letter-spacing:0.67px;color:#1b1b21;font-weight:400;-webkit-text-stroke:0.62px #1b1b21;transform:scaleX(1.0770);">Evidence due</div>
<div class="t" style="left:1470.8px;top:1073.7px;font-size:16.92px;letter-spacing:0.73px;color:#6c6c78;font-weight:400;-webkit-text-stroke:0.10px #6c6c78;transform:scaleX(1.0927);">Witness statements</div>
<div style="position:absolute;left:1410.5px;top:1125.8px;width:417.0999999999999px;height:78.20000000000005px;background:#fce8eb;border:1px solid #d8d8de;border-left:10px solid #dc2f45;border-radius:8px;box-sizing:border-box"></div>
<div class="t" style="left:1470.3px;top:1142.3px;font-size:17.34px;letter-spacing:0.58px;color:#1b1b21;font-weight:400;-webkit-text-stroke:0.62px #1b1b21;transform:scaleX(1.0816);">Statistics</div>
<div class="t" style="left:1470.5px;top:1172.4px;font-size:16.92px;letter-spacing:0.81px;color:#6c6c78;font-weight:400;-webkit-text-stroke:0.10px #6c6c78;transform:scaleX(1.1009);">Target module</div>
<div style="position:absolute;left:1823px;top:858px;width:4.5px;height:257px;background:#c6c6c8;border-radius:1px"></div>
<svg style="position:absolute;left:1425px;top:940px" width="45" height="260" viewBox="1425 940 45 260" fill="none" stroke="#1e1e24" stroke-width="1.9" stroke-linecap="round" stroke-linejoin="round">
<rect x="1435.5" y="957.4" width="20.2" height="20.2" rx="4"/><path d="M1435.5 962.3 H1455.7"/>
<g fill="#1e1e24" stroke="none"><circle cx="1440.3" cy="967.2" r="1.5"/><circle cx="1445.6" cy="967.2" r="1.5"/><circle cx="1450.9" cy="967.2" r="1.5"/><circle cx="1440.3" cy="972.4" r="1.5"/><circle cx="1445.6" cy="972.4" r="1.5"/></g>
<path d="M1434.2 1073.5 V1058.3 Q1434.2 1056.4 1436.1 1056.4 H1441 Q1442.2 1056.4 1443 1057.3 L1444.9 1059.5 H1454 Q1456 1059.5 1456 1061.5 V1069.2"/>
<path d="M1434.4 1074.6 L1438.2 1069.6 H1458.3 L1454.6 1074.2 Q1454 1075 1453 1075 H1435.4 Z"/>
<path d="M1437.6 1067.8 V1065.2 Q1437.6 1063.5 1439.3 1063.5 H1450.3 Q1452 1063.5 1452 1065.2 V1067.8" stroke-dasharray="2.2 2"/>
<g stroke="#2a1a1c" stroke-width="1.75"><circle cx="1445.4" cy="1164.4" r="11.4"/><circle cx="1445.4" cy="1164.4" r="7.3"/><circle cx="1445.4" cy="1164.4" r="3.3"/></g><circle cx="1445.4" cy="1164.4" r="1.2" fill="#2a1a1c" stroke="none"/>
</g></svg>
<div style="position:absolute;left:0px;top:0px;width:1850px;height:2px;background:#dcdcdf"></div>
<div style="position:absolute;left:0px;top:0px;width:1.5px;height:1234px;background:#dcdcdf"></div>
<div style="position:absolute;left:1848.8px;top:0px;width:1.2000000000000455px;height:1234px;background:#dcdcdf"></div>
<div style="position:absolute;left:0px;top:1232.3px;width:1850px;height:1.7000000000000455px;background:#dcdcdf"></div>
</body></html>
